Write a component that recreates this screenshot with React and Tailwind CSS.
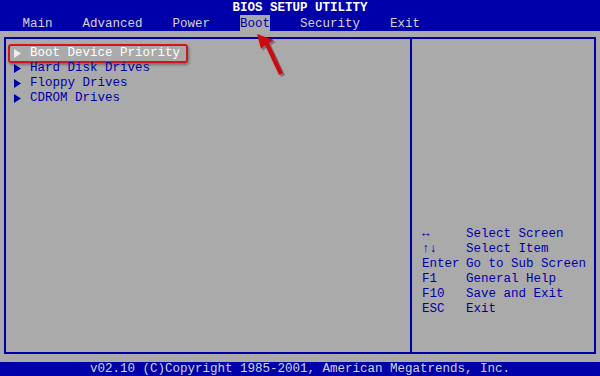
const font = { fontFamily: '"Liberation Mono", "DejaVu Sans Mono", monospace' };

function Tri({ color }) {
  return (
    <svg width="7" height="9" viewBox="0 0 7 9" className="shrink-0">
      <path d="M0 0 L7 4.5 L0 9 Z" fill={color} />
    </svg>
  );
}

const items = ["Boot Device Priority", "Hard Disk Drives", "Floppy Drives", "CDROM Drives"];

const help = [
  ["↔", "Select Screen"],
  ["↑↓", "Select Item"],
  ["Enter", "Go to Sub Screen"],
  ["F1", "General Help"],
  ["F10", "Save and Exit"],
  ["ESC", "Exit"],
];

export default function App() {
  return (
    <div
      className="relative flex h-[376px] w-[600px] flex-col overflow-hidden bg-[#aaaaaa] text-[12.5px] leading-[15px]"
      style={font}
    >
      <div className="bg-[#0000aa]">
        <div className="h-[15px] pt-[1px] text-center font-bold text-white">BIOS SETUP UTILITY</div>
        <div className="h-[16px] whitespace-pre text-[#d4d4d4]">
          <span className="inline-block pt-[2px]">{"   Main    Advanced    Power    "}</span>
          <span className="inline-block h-[16px] bg-[#aaaaaa] pt-[2px] text-[#0000aa]">Boot</span>
          <span className="inline-block pt-[2px]">{"    Security    Exit"}</span>
        </div>
      </div>

      <div className="mx-[4px] mt-[6px] flex h-[317px] border-2 border-[#0000aa]">
        <div className="flex w-[404px] flex-col pt-[7px]">
          {items.map((label, i) => (
            <div key={label} className="relative flex h-[15px] items-center gap-[9px] pl-[8px]">
              <Tri color={i === 0 ? "#eeeeee" : "#0000aa"} />
              <span className={i === 0 ? "text-white" : "text-[#0000aa]"}>{label}</span>
              {i === 0 && (
                <div className="absolute left-[2px] top-[-2px] h-[19px] w-[180px] rounded-[3px] border-2 border-[#d0161b] shadow-[1px_2px_3px_rgba(0,0,0,0.35)]" />
              )}
            </div>
          ))}
        </div>
        <div className="w-[2px] bg-[#0000aa]" />
        <div className="flex flex-1 flex-col justify-end pb-[35px] pl-[10px] text-[#0000aa]">
          {help.map(([k, d]) => (
            <div key={k} className="flex h-[15px]">
              <span className="w-[44px]">{k}</span>
              <span>{d}</span>
            </div>
          ))}
        </div>
      </div>

      <div className="mt-auto h-[14px] bg-[#0000aa] text-center leading-[14px] text-[#d4d4d4]">
        v02.10 (C)Copyright 1985-2001, American Megatrends, Inc.
      </div>

      <svg className="absolute left-[252px] top-[30px]" width="40" height="52" viewBox="0 0 40 52">
        <g transform="translate(2 2)" fill="rgba(0,0,0,0.3)">
          <path d="M5 4 L22 10 L17 13 L31 43 L27 45 L13 15 L9 19 Z" />
        </g>
        <path d="M5 4 L22 10 L17 13 L31 43 L27 45 L13 15 L9 19 Z" fill="#cc0a12" />
      </svg>
    </div>
  );
}
